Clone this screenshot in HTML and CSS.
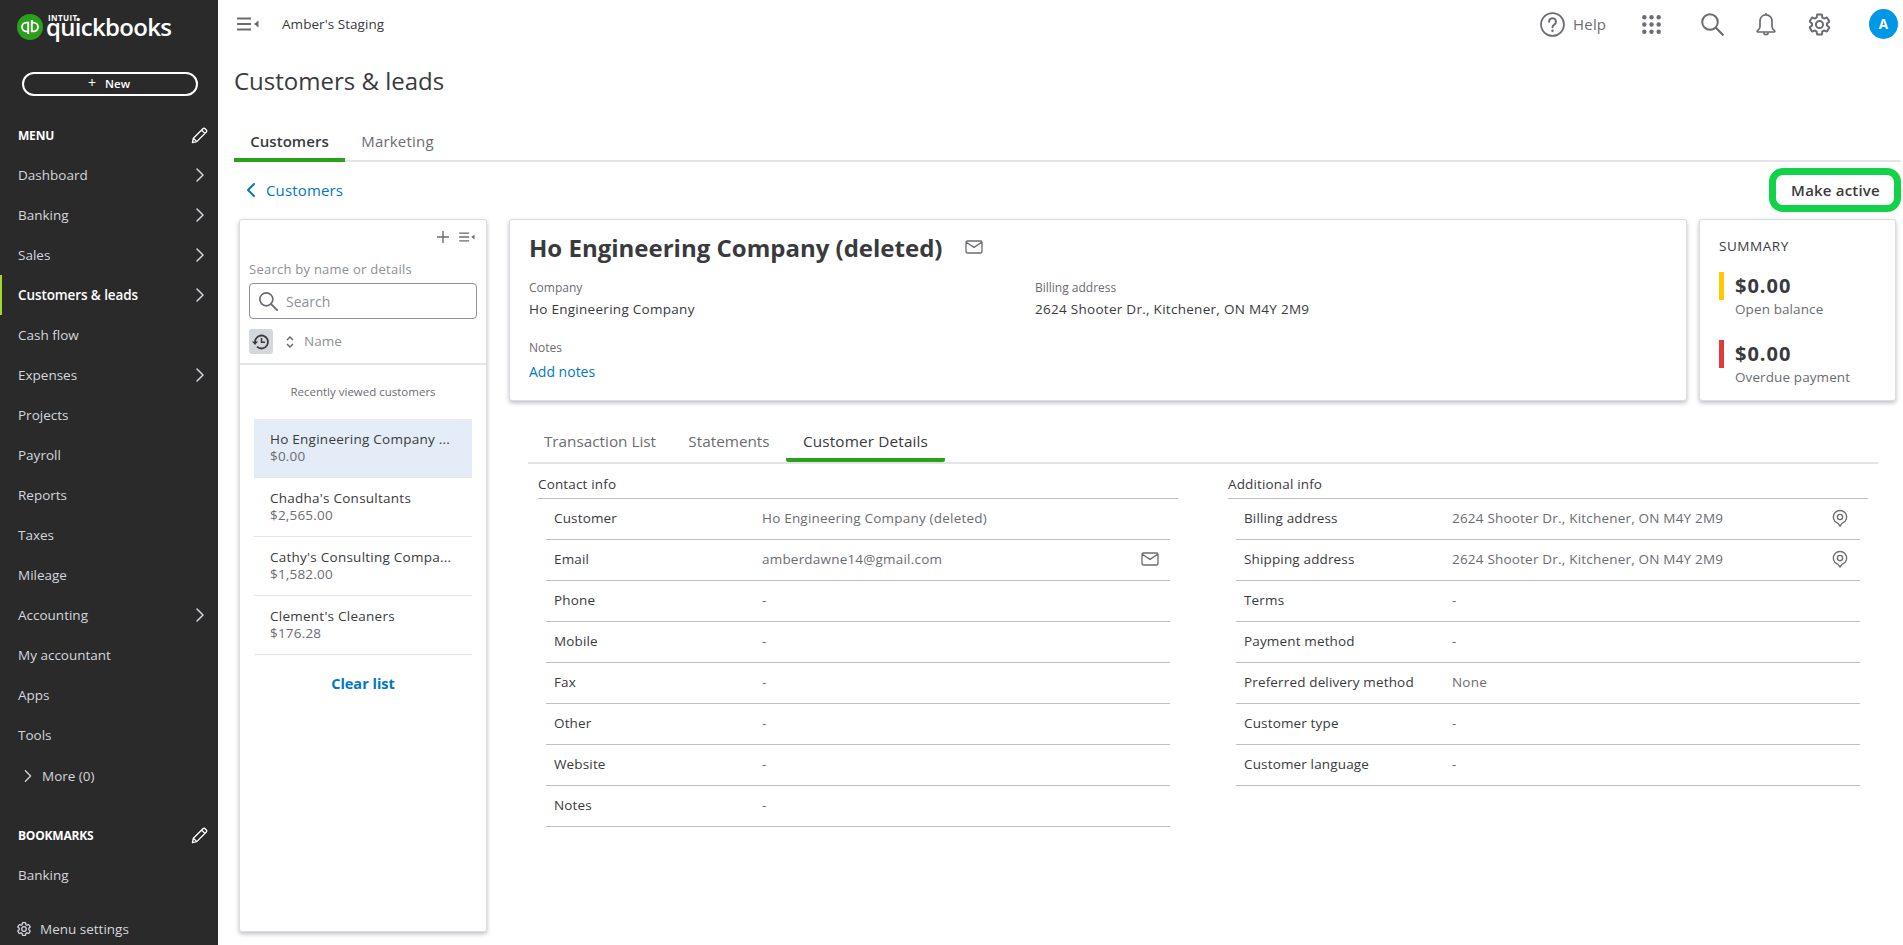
FILE: index.html
```html
<!DOCTYPE html>
<html lang="en">
<head>
<meta charset="utf-8">
<title>Customers &amp; leads</title>
<link rel="stylesheet" href="styles.css">
</head>
<body>
<svg class="defs" aria-hidden="true">
  <symbol id="gear" viewBox="0 0 24 24"><path fill="none" stroke="currentColor" stroke-width="1.9" stroke-linejoin="round" d="M19.14 12.94c.04-.3.06-.61.06-.94 0-.32-.02-.64-.07-.94l2.03-1.58c.18-.14.23-.41.12-.61l-1.92-3.32c-.12-.22-.37-.29-.59-.22l-2.39.96c-.5-.38-1.03-.7-1.62-.94l-.36-2.54c-.04-.24-.24-.41-.48-.41h-3.84c-.24 0-.43.17-.47.41l-.36 2.54c-.59.24-1.13.57-1.62.94l-2.39-.96c-.22-.08-.47 0-.59.22L2.74 8.87c-.12.21-.08.47.12.61l2.03 1.58c-.05.3-.09.63-.09.94s.02.64.07.94l-2.03 1.58c-.18.14-.23.41-.12.61l1.92 3.32c.12.22.37.29.59.22l2.39-.96c.5.38 1.03.7 1.62.94l.36 2.54c.05.24.24.41.48.41h3.84c.24 0 .44-.17.47-.41l.36-2.54c.59-.24 1.13-.56 1.62-.94l2.39.96c.22.08.47 0 .59-.22l1.92-3.32c.12-.22.07-.47-.12-.61l-2.01-1.58z"/><circle cx="12" cy="12" r="3.4" fill="none" stroke="currentColor" stroke-width="1.9"/></symbol>
  <symbol id="chev" viewBox="0 0 10 16"><path fill="none" stroke="currentColor" stroke-width="1.5" stroke-linecap="round" stroke-linejoin="round" d="M2 2l6 6-6 6"/></symbol>
  <symbol id="pencil" viewBox="0 0 18 18"><path fill="none" stroke="currentColor" stroke-width="1.4" stroke-linejoin="round" d="M1.5 16.5l1-4.6L12.6 1.8a1.6 1.6 0 0 1 2.3 0l1.3 1.3a1.6 1.6 0 0 1 0 2.3L6.1 15.5zM2.5 11.9l3.6 3.6M11.2 3.2l3.6 3.6"/></symbol>
  <symbol id="mag" viewBox="0 0 24 24"><circle cx="10" cy="10" r="7.8" fill="none" stroke="currentColor" stroke-width="2"/><path stroke="currentColor" stroke-width="2.2" stroke-linecap="round" d="M15.8 15.8l7 7"/></symbol>
  <symbol id="mail" viewBox="0 0 18 14"><path fill="none" stroke="currentColor" stroke-width="1.3" stroke-linejoin="round" stroke-linecap="round" d="M2.6 1h12.8A1.6 1.6 0 0 1 17 2.6v8.8a1.6 1.6 0 0 1-1.6 1.6H2.6A1.6 1.6 0 0 1 1 11.4V2.6A1.6 1.6 0 0 1 2.6 1zM1.3 2.2L9 7.4l7.7-5.2"/></symbol>
  <symbol id="pin" viewBox="0 0 16 18"><path fill="none" stroke="currentColor" stroke-width="1.3" stroke-linejoin="round" d="M8 17l-2-2.6A6.6 6.6 0 1 1 10 14.4z"/><circle cx="8" cy="8" r="2.6" fill="none" stroke="currentColor" stroke-width="1.3"/></symbol>
  <symbol id="menuc" viewBox="0 0 22 14"><path stroke="currentColor" stroke-width="1.8" d="M0 1.5h14M0 7h14M0 12.5h14"/><path fill="currentColor" d="M21.5 3.6v6.8L17 7z"/></symbol>
</svg>

<div class="app">
  <aside class="side">
    <div class="logo">
      <svg class="logo-mark" viewBox="0 0 26 26"><circle cx="13" cy="13" r="13" fill="#2ca01c"/><path fill="none" stroke="#fff" stroke-width="1.9" d="M11.200 20V8.600H9.400a4.400 4.400 0 0 0 0 8.800h.9M14.800 6v11.400h1.800a4.400 4.400 0 0 0 0-8.800h-.9"/></svg>
      <div class="logo-text"><span class="logo-intuit">INTUIT</span><span class="logo-qb">quickbooks</span></div>
    </div>
    <div class="new-wrap"><button class="new-btn"><span class="new-plus">+</span>New</button></div>
    <div class="side-head menu-head"><span>MENU</span><svg class="ico-pencil"><use href="#pencil"/></svg></div>
    <nav class="nav">
      <a class="nav-item">Dashboard<svg class="ico-chev"><use href="#chev"/></svg></a>
      <a class="nav-item">Banking<svg class="ico-chev"><use href="#chev"/></svg></a>
      <a class="nav-item">Sales<svg class="ico-chev"><use href="#chev"/></svg></a>
      <a class="nav-item active">Customers &amp; leads<svg class="ico-chev"><use href="#chev"/></svg></a>
      <a class="nav-item">Cash flow</a>
      <a class="nav-item">Expenses<svg class="ico-chev"><use href="#chev"/></svg></a>
      <a class="nav-item">Projects</a>
      <a class="nav-item">Payroll</a>
      <a class="nav-item">Reports</a>
      <a class="nav-item">Taxes</a>
      <a class="nav-item">Mileage</a>
      <a class="nav-item">Accounting<svg class="ico-chev"><use href="#chev"/></svg></a>
      <a class="nav-item">My accountant</a>
      <a class="nav-item">Apps</a>
      <a class="nav-item">Tools</a>
      <a class="nav-item more"><svg class="ico-chev-more"><use href="#chev"/></svg>More (0)</a>
    </nav>
    <div class="side-head book-head"><span>BOOKMARKS</span><svg class="ico-pencil"><use href="#pencil"/></svg></div>
    <a class="nav-item">Banking</a>
    <div class="menu-settings"><svg class="ico-settings"><use href="#gear"/></svg>Menu settings</div>
  </aside>

  <main class="main">
    <header class="topbar">
      <svg class="ico-menu"><use href="#menuc"/></svg>
      <span class="company">Amber's Staging</span>
      <div class="top-right">
        <svg class="ico-help" viewBox="0 0 24 24"><circle cx="12" cy="12" r="11" fill="none" stroke="currentColor" stroke-width="1.7"/><path fill="none" stroke="currentColor" stroke-width="1.9" stroke-linecap="round" d="M8.7 9.3a3.3 3.3 0 1 1 5 2.8c-1 .6-1.7 1.2-1.7 2.5"/><circle cx="12" cy="18" r="1.2" fill="currentColor"/></svg>
        <span class="help-label">Help</span>
        <svg class="ico-grid" viewBox="0 0 18 18"><g fill="currentColor"><circle cx="2.2" cy="2.2" r="2.1"/><circle cx="9" cy="2.2" r="2.1"/><circle cx="15.8" cy="2.2" r="2.1"/><circle cx="2.2" cy="9" r="2.1"/><circle cx="9" cy="9" r="2.1"/><circle cx="15.8" cy="9" r="2.1"/><circle cx="2.2" cy="15.8" r="2.1"/><circle cx="9" cy="15.8" r="2.1"/><circle cx="15.8" cy="15.8" r="2.1"/></g></svg>
        <svg class="ico-search-top"><use href="#mag"/></svg>
        <svg class="ico-bell" viewBox="0 0 20 25"><path fill="none" stroke="currentColor" stroke-width="1.7" stroke-linejoin="round" d="M10 2.800c-3.800 0-6 3-6 6.600v5.400c0 1.600-1 2.800-2.600 4-.5.4-.2 1.200.4 1.200h16.400c.6 0 .9-.8.4-1.200-1.600-1.200-2.600-2.400-2.600-4V9.400c0-3.600-2.200-6.600-6-6.600z"/><path fill="none" stroke="currentColor" stroke-width="1.7" d="M10 1v1.800M7.800 20.500c0 2.800 4.400 2.800 4.400 0"/></svg>
        <svg class="ico-gear-top"><use href="#gear"/></svg>
        <span class="avatar">A</span>
      </div>
    </header>

    <h1 class="page-title">Customers &amp; leads</h1>

    <div class="page-tabs">
      <span class="page-tab on">Customers</span>
      <span class="page-tab">Marketing</span>
    </div>

    <div class="action-row">
      <a class="back-link"><svg class="ico-back" viewBox="0 0 10 16"><path fill="none" stroke="currentColor" stroke-width="2" stroke-linecap="round" stroke-linejoin="round" d="M8 2L2 8l6 6"/></svg>Customers</a>
      <button class="make-active">Make active</button>
    </div>

    <div class="columns">
      <section class="card list-card">
        <div class="list-tools">
          <svg class="ico-plus" viewBox="0 0 12 12"><path stroke="currentColor" stroke-width="1.4" d="M6 0v12M0 6h12"/></svg>
          <svg class="ico-menu-sm"><use href="#menuc"/></svg>
        </div>
        <div class="list-search">
          <label class="search-label">Search by name or details</label>
          <div class="search-box"><svg class="ico-search-sm"><use href="#mag"/></svg><span class="search-ph">Search</span></div>
        </div>
        <div class="sort-row">
          <span class="hist-btn"><svg class="ico-hist" viewBox="0 0 18 18"><path fill="none" stroke="currentColor" stroke-width="1.8" d="M3 9a6.500 6.500 0 1 1 2 4.700"/><path fill="currentColor" d="M0 8.500h6l-3 3.500z"/><path fill="none" stroke="currentColor" stroke-width="1.500" d="M9.500 5v4.300h3.500"/></svg></span>
          <svg class="ico-sort" viewBox="0 0 8 14"><path fill="none" stroke="currentColor" stroke-width="1.500" d="M1 5l3-3 3 3M1 9l3 3 3-3"/></svg>
          <span class="sort-name">Name</span>
        </div>
        <div class="recent-label">Recently viewed customers</div>
        <ul class="cust-list">
          <li class="cust sel"><span class="cust-name">Ho Engineering Company ...</span><span class="cust-amt">$0.00</span></li>
          <li class="cust"><span class="cust-name">Chadha's Consultants</span><span class="cust-amt">$2,565.00</span></li>
          <li class="cust"><span class="cust-name">Cathy's Consulting Compa...</span><span class="cust-amt">$1,582.00</span></li>
          <li class="cust"><span class="cust-name">Clement's Cleaners</span><span class="cust-amt">$176.28</span></li>
        </ul>
        <a class="clear-list">Clear list</a>
      </section>

      <div class="detail">
        <div class="top-cards">
          <section class="card info-card">
            <div class="info-title"><h2>Ho Engineering Company (deleted)</h2><svg class="ico-mail-title"><use href="#mail"/></svg></div>
            <div class="info-grid">
              <div class="info-block"><div class="info-label">Company</div><div class="info-value">Ho Engineering Company</div></div>
              <div class="info-block"><div class="info-label">Billing address</div><div class="info-value">2624 Shooter Dr., Kitchener, ON M4Y 2M9</div></div>
            </div>
            <div class="info-label notes-label">Notes</div>
            <a class="add-notes">Add notes</a>
          </section>
          <section class="card summary">
            <div class="summary-title">SUMMARY</div>
            <div class="sum-item yellow"><div class="sum-amt">$0.00</div><div class="sum-label">Open balance</div></div>
            <div class="sum-item red"><div class="sum-amt">$0.00</div><div class="sum-label">Overdue payment</div></div>
          </section>
        </div>

        <div class="sub-tabs">
          <span class="sub-tab tab-a">Transaction List</span>
          <span class="sub-tab tab-b">Statements</span>
          <span class="sub-tab tab-c on">Customer Details</span>
        </div>

        <div class="tables">
          <div class="tbl">
            <div class="tbl-title">Contact info</div>
            <div class="tbl-row"><span class="tbl-k">Customer</span><span class="tbl-v">Ho Engineering Company (deleted)</span></div>
            <div class="tbl-row"><span class="tbl-k">Email</span><span class="tbl-v">amberdawne14@gmail.com</span><svg class="ico-mail"><use href="#mail"/></svg></div>
            <div class="tbl-row"><span class="tbl-k">Phone</span><span class="tbl-v">-</span></div>
            <div class="tbl-row"><span class="tbl-k">Mobile</span><span class="tbl-v">-</span></div>
            <div class="tbl-row"><span class="tbl-k">Fax</span><span class="tbl-v">-</span></div>
            <div class="tbl-row"><span class="tbl-k">Other</span><span class="tbl-v">-</span></div>
            <div class="tbl-row"><span class="tbl-k">Website</span><span class="tbl-v">-</span></div>
            <div class="tbl-row"><span class="tbl-k">Notes</span><span class="tbl-v">-</span></div>
          </div>
          <div class="tbl">
            <div class="tbl-title">Additional info</div>
            <div class="tbl-row"><span class="tbl-k">Billing address</span><span class="tbl-v">2624 Shooter Dr., Kitchener, ON M4Y 2M9</span><svg class="ico-pin"><use href="#pin"/></svg></div>
            <div class="tbl-row"><span class="tbl-k">Shipping address</span><span class="tbl-v">2624 Shooter Dr., Kitchener, ON M4Y 2M9</span><svg class="ico-pin"><use href="#pin"/></svg></div>
            <div class="tbl-row"><span class="tbl-k">Terms</span><span class="tbl-v">-</span></div>
            <div class="tbl-row"><span class="tbl-k">Payment method</span><span class="tbl-v">-</span></div>
            <div class="tbl-row"><span class="tbl-k">Preferred delivery method</span><span class="tbl-v">None</span></div>
            <div class="tbl-row"><span class="tbl-k">Customer type</span><span class="tbl-v">-</span></div>
            <div class="tbl-row"><span class="tbl-k">Customer language</span><span class="tbl-v">-</span></div>
          </div>
        </div>
      </div>
    </div>
  </main>
</div>
</body>
</html>
```
FILE: styles.css
```css
* { box-sizing: border-box; }
html, body { margin: 0; padding: 0; height: 945px; overflow: hidden; background: #fff; }
body { font-family: "Open Sans", "Liberation Sans", sans-serif; font-size: 13px; color: #393a3d; }
h1, h2, ul { margin: 0; padding: 0; }
svg { display: block; flex: none; }
.defs { width: 0; height: 0; position: absolute; }
.app { display: flex; height: 945px; }

/* sidebar */
.side { width: 218px; flex: none; background: #2a2a2b; color: #d4d7dc; display: flex; flex-direction: column; }
.logo { display: flex; height: 72px; padding: 14px 0 0 17px; gap: 3px; }
.logo-mark { width: 26px; height: 26px; }
.logo-text { display: flex; flex-direction: column; color: #fff; height: 30px; }
.logo-intuit { font-size: 8px; font-weight: 700; line-height: 8px; letter-spacing: .4px; padding-left: 2px; }
.logo-qb { font-size: 24px; font-weight: 600; line-height: 10px; letter-spacing: -.7px; height: 10px; }
.new-wrap { padding: 0 20px 0 22px; }
.new-btn { width: 176px; height: 24px; border: 2px solid #fff; border-radius: 12px; background: transparent; color: #fff; font: 600 11.5px "Open Sans", sans-serif; display: flex; align-items: center; justify-content: center; gap: 9px; padding: 0 2px 2px 0; }
.new-plus { font-size: 14px; font-weight: 400; line-height: 14px; }
.side-head { display: flex; align-items: center; justify-content: space-between; padding: 0 10px 0 18px; font-size: 12px; font-weight: 700; color: #fff; height: 20px; letter-spacing: -.2px; }
.menu-head { margin-top: 29px; }
.book-head { margin-top: 28px; }
.ico-pencil { width: 17px; height: 17px; color: #fff; }
.nav { margin-top: 10px; display: flex; flex-direction: column; }
.nav-item { height: 40px; display: flex; align-items: center; justify-content: space-between; padding: 0 13px 0 18px; font-size: 13.5px; color: #d4d7dc; flex: none; }
.nav-item.active { color: #fff; font-weight: 600; border-left: 2px solid #a2d82a; padding-left: 16px; letter-spacing: -.1px; }
.ico-chev { width: 10px; height: 16px; color: #d4d7dc; }
.nav-item.more { justify-content: flex-start; gap: 9px; padding-left: 23px; height: 42px; }
.ico-chev-more { width: 10px; height: 14px; color: #d4d7dc; }
.book-head + .nav-item { margin-top: 10px; }
.menu-settings { display: flex; align-items: center; gap: 8px; padding-left: 16px; margin-top: 20px; color: #d4d7dc; font-size: 13.5px; height: 28px; }
.ico-settings { width: 16px; height: 16px; }

/* main */
.main { flex: 1; min-width: 0; display: flex; flex-direction: column; padding: 0 2px 0 16px; }
.topbar { height: 48px; display: flex; align-items: center; flex: none; }
.ico-menu { width: 22px; height: 14px; margin-left: 3px; color: #6b6c72; }
.company { margin-left: 23px; font-size: 13.5px; letter-spacing: .05px; color: #393a3d; }
.top-right { margin-left: auto; display: flex; align-items: center; color: #6b6c72; padding-right: 3px; }
.ico-help { width: 25px; height: 25px; }
.help-label { margin-left: 8px; font-size: 15px; letter-spacing: .2px; color: #6b6c72; width: 34px; }
.ico-grid { width: 19px; height: 19px; margin-left: 35px; }
.ico-search-top { width: 24px; height: 24px; margin-left: 39px; }
.ico-bell { width: 20px; height: 25px; margin-left: 32px; }
.ico-gear-top { width: 25px; height: 25px; margin-left: 31px; }
.avatar { width: 29px; height: 30px; border-radius: 50%; background: #0097e6; color: #fff; font-weight: 700; font-size: 13.5px; display: flex; align-items: center; justify-content: center; margin-left: 37px; }
.page-title { font-size: 24px; font-weight: 500; color: #393a3d; height: 67px; line-height: 65px; flex: none; }
.page-tabs { display: flex; height: 47px; border-bottom: 2px solid #e3e5e8; flex: none; }
.page-tab { font-size: 15px; line-height: 53px; color: #6b6c72; height: 47px; letter-spacing: .2px; text-align: center; width: 105px; }
.page-tab.on { width: 111px; color: #393a3d; font-weight: 600; letter-spacing: .05px; border-bottom: 4px solid #2ca01c; }
.action-row { display: flex; align-items: center; justify-content: space-between; height: 44px; margin-top: 6px; flex: none; }
.back-link { display: flex; align-items: center; gap: 10px; padding-left: 12px; color: #0077c5; font-size: 15px; letter-spacing: .15px; }
.ico-back { width: 10px; height: 16px; }
.make-active { width: 132px; height: 44px; border: 7px solid #12d24a; border-radius: 14px; background: #fff; color: #393a3d; font: 600 15px "Open Sans", sans-serif; letter-spacing: .2px; padding: 0 0 0 1px; }
.columns { display: flex; margin: 7px 5px 0 5px; gap: 22px; flex: none; }
.card { background: #fff; border: 1px solid #dadce0; border-radius: 3px; box-shadow: 0 2px 4px rgba(90, 95, 110, .4); }

/* list card */
.list-card { width: 248px; height: 713px; flex: none; display: flex; flex-direction: column; }
.list-tools { display: flex; justify-content: flex-end; align-items: center; gap: 10px; height: 33px; padding: 0 11px 0 0; color: #6b6c72; }
.ico-plus { width: 12px; height: 12px; }
.ico-menu-sm { width: 16px; height: 10px; }
.list-search { padding: 0 9px; }
.search-label { display: block; font-size: 13px; letter-spacing: .25px; line-height: 16px; color: #8d9096; height: 30px; padding-top: 8px; }
.search-box { height: 36px; border: 1px solid #8d9096; border-radius: 4px; display: flex; align-items: center; padding-left: 8px; gap: 8px; }
.ico-search-sm { width: 20px; height: 20px; color: #6b6c72; }
.search-ph { font-size: 14px; color: #8d9096; }
.sort-row { display: flex; align-items: center; padding: 0 9px 8px; border-bottom: 2px solid #e3e5e8; margin-top: 9px; height: 37px; }
.hist-btn { width: 24px; height: 25px; background: #d4d7dc; border-radius: 3px; display: flex; align-items: center; justify-content: center; color: #393a3d; }
.ico-hist { width: 18px; height: 18px; }
.ico-sort { width: 8px; height: 14px; margin-left: 13px; color: #6b6c72; }
.sort-name { margin-left: 10px; font-size: 13.5px; color: #8d9096; padding-bottom: 1px; }
.recent-label { text-align: center; font-size: 11.5px; line-height: 16px; margin-top: 19px; color: #6b6c72; height: 35px; }
.cust-list { list-style: none; padding: 0 14px; }
.cust { height: 59px; display: flex; flex-direction: column; padding: 11px 0 0 16px; border-bottom: 1px solid #e3e5e8; }
.cust.sel { background: #e4ecf7; }
.cust-name { font-size: 13.5px; letter-spacing: .25px; line-height: 18px; color: #393a3d; white-space: nowrap; font-weight: 500; }
.cust-amt { font-size: 13.5px; letter-spacing: .2px; line-height: 17px; color: #6b6c72; }
.clear-list { display: block; text-align: center; margin-top: 18px; color: #0077c5; font-size: 14.5px; font-weight: 700; line-height: 21px; }

/* detail */
.detail { display: flex; flex-direction: column; flex: 1; min-width: 0; }
.top-cards { display: flex; gap: 12px; }
.info-card { width: 1178px; height: 182px; flex: none; padding: 0 19px; }
.info-title { display: flex; align-items: center; height: 54px; gap: 23px; margin-bottom: 3px; }
.info-title h2 { font-size: 24px; font-weight: 700; color: #393a3d; }
.ico-mail-title { width: 18px; height: 14px; color: #6b6c72; }
.info-grid { display: grid; grid-template-columns: 506px 1fr; }
.info-label { font-size: 12px; line-height: 16px; color: #6b6c72; padding-top: 3px; height: 19px; }
.info-value { font-size: 13.5px; letter-spacing: .28px; line-height: 20px; color: #393a3d; padding-top: 3px; height: 23px; }
.notes-label { margin-top: 18px; }
.add-notes { display: block; font-size: 14px; line-height: 20px; margin-top: 6px; color: #0077c5; }
.summary { width: 197px; height: 182px; flex: none; padding: 17px 0 0 19px; }
.summary-title { font-size: 13.5px; line-height: 18px; color: #393a3d; letter-spacing: .55px; }
.sum-item { border-left: 5px solid; height: 28px; padding-left: 11px; margin-top: 17px; }
.sum-item.yellow { border-color: #ffc800; }
.sum-item.red { border-color: #e03a3a; margin-top: 40px; }
.sum-amt { font-size: 20px; font-weight: 700; line-height: 28px; letter-spacing: 1px; color: #393a3d; }
.sum-label { font-size: 13.5px; letter-spacing: .1px; line-height: 18px; color: #6b6c72; white-space: nowrap; }
.sub-tabs { display: flex; margin: 20px 0 0 19px; width: 1350px; height: 43px; border-bottom: 2px solid #e3e5e8; flex: none; }
.sub-tab { text-align: center; font-size: 15.3px; line-height: 40px; color: #6b6c72; height: 41px; }
.tab-a { width: 144px; }
.tab-b { width: 114px; }
.tab-c { width: 159px; }
.sub-tab.on { color: #393a3d; border-bottom: 4px solid #2ca01c; border-radius: 0 0 2px 2px; letter-spacing: .15px; }
.tables { display: flex; gap: 50px; margin-left: 29px; }
.tbl { width: 640px; flex: none; }
.tbl-title { height: 35px; border-bottom: 1px solid #babec5; line-height: 41px; font-size: 13.5px; letter-spacing: .15px; color: #393a3d; }
.tbl-row { height: 41px; margin: 0 8px; padding: 0 8px 2px; border-bottom: 1px solid #babec5; display: flex; align-items: center; font-size: 13.5px; letter-spacing: .15px; color: #393a3d; }
.tbl-k { width: 208px; flex: none; }
.tbl-v { flex: 1; color: #6b6c72; font-size: 13.5px; letter-spacing: .2px; }
.ico-mail { width: 18px; height: 14px; color: #6b6c72; margin-right: 3px; }
.ico-pin { width: 16px; height: 18px; color: #6b6c72; margin-right: 4px; }
```
